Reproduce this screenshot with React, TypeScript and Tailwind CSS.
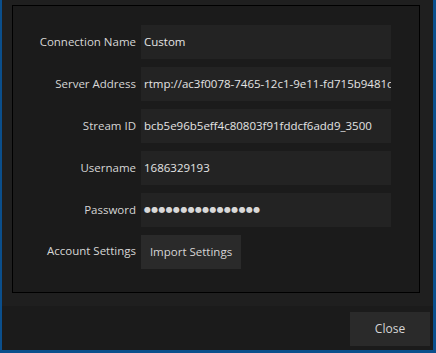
import React from "react";

const FONT = { fontFamily: '"Open Sans", "Noto Sans", sans-serif' };

const rows: Array<{ label: string; value: string }> = [
  { label: "Connection Name", value: "Custom" },
  { label: "Server Address", value: "rtmp://ac3f0078-7465-12c1-9e11-fd715b9481d1.rtmp" },
  { label: "Stream ID", value: "bcb5e96b5eff4c80803f91fddcf6add9_3500" },
  { label: "Username", value: "1686329193" },
  { label: "Password", value: "●●●●●●●●●●●●●●●●" },
];

export default function App() {
  return (
    <div
      className="w-[436px] h-[353px] flex flex-col bg-[#1f1f1f] border-l-2 border-r-[3px] border-b-[3px] border-[#0b4f8c] text-[11.5px] text-[#d6d6d6]"
      style={FONT}
    >
      {/* settings panel */}
      <div className="h-[306px] pl-[10px] pt-[5px]">
        <div className="w-[408px] h-[288px] bg-[#1b1b1b] border border-black pt-[19px] flex flex-col gap-[8px]">
          {rows.map((r) => (
            <div key={r.label} className="flex items-center gap-[5px]">
              <div className="w-[123px] text-right whitespace-nowrap">{r.label}</div>
              <div className="w-[250px] h-[34px] bg-[#232323] flex items-center pl-[3px] overflow-hidden whitespace-nowrap text-[#e4e4e4]">
                {r.label === "Password" ? (
                  <span
                    className="text-[8px] tracking-[0.3px] text-[#d8d8d8]"
                    style={{ fontFamily: '"DejaVu Sans", sans-serif' }}
                  >
                    {r.value}
                  </span>
                ) : (
                  r.value
                )}
              </div>
            </div>
          ))}
          <div className="flex items-center gap-[5px]">
            <div className="w-[123px] text-right whitespace-nowrap -mt-[2px]">Account Settings</div>
            <button className="w-[100px] h-[34px] bg-[#2a2a2a] text-[11.5px] text-[#d6d6d6]">
              Import Settings
            </button>
          </div>
        </div>
      </div>
      {/* footer */}
      <div className="flex-1 bg-[#1b1b1b] flex justify-end items-start pt-[6px] pr-[3px]">
        <button className="w-[80px] h-[34px] bg-[#2a2a2a] text-[12px] text-[#d6d6d6]">Close</button>
      </div>
    </div>
  );
}
